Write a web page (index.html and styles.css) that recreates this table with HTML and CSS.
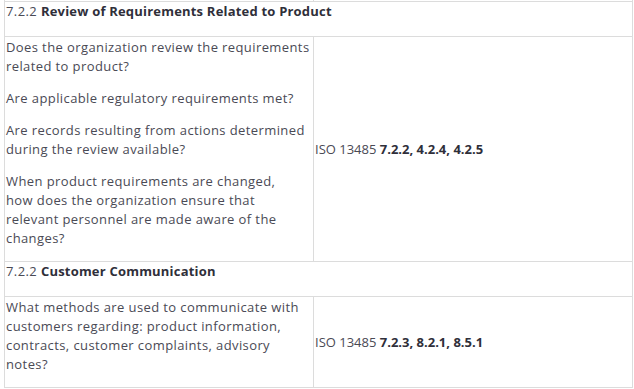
FILE: index.html
```html
<!DOCTYPE html>
<html>
<head>
<meta charset="utf-8">
<link rel="stylesheet" href="styles.css">
</head>
<body>
<table class="req-table">
  <colgroup><col class="col-q"><col class="col-ref"></colgroup>
  <tr class="prev-row"><td></td><td></td></tr>
  <tr class="section-row">
    <td colspan="2"><p>7.2.2 <strong>Review of Requirements Related to Product</strong></p></td>
  </tr>
  <tr>
    <td class="q-cell">
      <p>Does the organization review the requirements related to product?</p>
      <p>Are applicable regulatory requirements met?</p>
      <p>Are records resulting from actions determined during the review available?</p>
      <p>When product requirements are changed,<br>how does the organization ensure that<br>relevant personnel are made aware of the<br>changes?</p>
    </td>
    <td class="ref-cell">ISO 13485 <strong>7.2.2, 4.2.4, 4.2.5</strong></td>
  </tr>
  <tr class="section-row">
    <td colspan="2"><p>7.2.2 <strong>Customer Communication</strong></p></td>
  </tr>
  <tr>
    <td class="q-cell">
      <p>What methods are used to communicate with customers regarding: product information, contracts, customer complaints, advisory notes?</p>
    </td>
    <td class="ref-cell">ISO 13485 <strong>7.2.3, 8.2.1, 8.5.1</strong></td>
  </tr>
</table>
</body>
</html>
```
FILE: styles.css
```css
html, body {
  margin: 0;
  padding: 0;
  background: #ffffff;
}
body {
  font-family: "Open Sans", "Noto Sans", sans-serif;
  font-size: 13px;
  line-height: 19px;
  letter-spacing: 0.4px;
  color: #4a4a55;
}
.req-table {
  border-collapse: collapse;
  table-layout: fixed;
  width: 629px;
  margin: -19px 0 0 4px;
}
.col-q { width: 309px; }
.req-table td {
  border: 1px solid #dcdcdc;
  padding: 1px 1px 0 1px;
  vertical-align: top;
}
.prev-row td {
  height: 18px;
}
.req-table p {
  margin: 0 0 13px 0;
}
.section-row td {
  padding-top: 0;
  padding-bottom: 2px;
}
.req-table strong {
  font-weight: 700;
  letter-spacing: 0.2px;
  color: #2f2f3a;
}
.req-table td.ref-cell {
  vertical-align: middle;
  padding-left: 1px;
  letter-spacing: 0;
}
.req-table td.ref-cell strong {
  letter-spacing: 0;
}
```
